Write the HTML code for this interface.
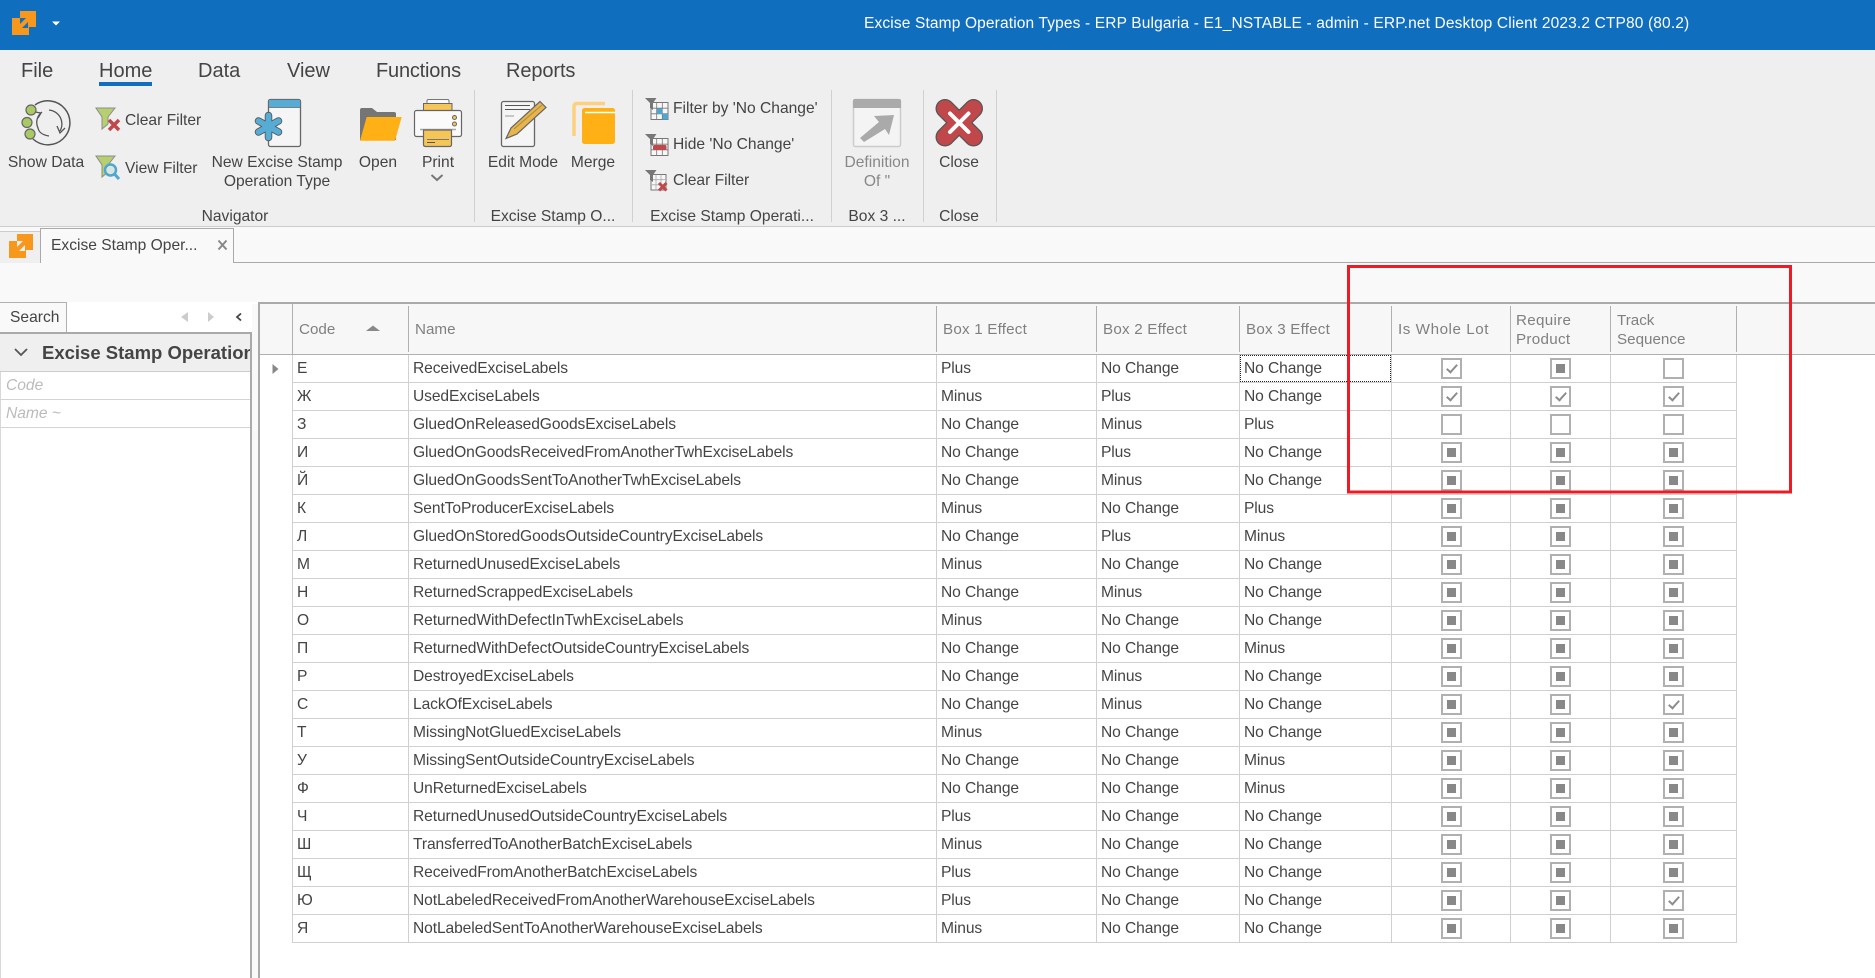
<!DOCTYPE html>
<html><head><meta charset="utf-8"><style>
html,body{margin:0;padding:0;width:1875px;height:978px;overflow:hidden;background:#fff;font-family:"Liberation Sans",sans-serif;color:#444}
.a{position:absolute;white-space:nowrap;line-height:20px}
.m{font-size:20px;top:61px}
.t{font-size:15.6px}
.c{transform:translateX(-50%)}
.h{font-size:15.2px;color:#808080}
#g{position:absolute;left:292px;top:355px;border-left:1px solid #d0d0d0}
.r{display:grid;grid-template-columns:116px 528px 160px 143px 152px 119px 100px 126px;height:28px;font-size:15.6px;letter-spacing:-.1px;line-height:27px}
.r>*{border:solid #d0d0d0;border-width:0 1px 1px 0;box-sizing:border-box;padding-left:4px;white-space:nowrap;overflow:hidden;position:relative;display:block;font-style:normal;height:28px}
.r>i::before{content:"";position:absolute;box-sizing:border-box;width:21px;height:21px;top:3px;border:2px solid #b0b0b0;background:#fff}
.n::after{content:"";position:absolute;width:9px;height:9px;background:#888;top:9px}
.v::after{content:"";position:absolute;box-sizing:border-box;width:6px;height:11px;border:solid #8c8c8c;border-width:0 2px 2px 0;transform:rotate(42deg);top:7px}
.r>i:nth-child(6)::before{left:49px}.r>i:nth-child(6).n::after{left:55px}.r>i:nth-child(6).v::after{left:57px}
.r>i:nth-child(7)::before{left:39px}.r>i:nth-child(7).n::after{left:45px}.r>i:nth-child(7).v::after{left:47px}
.r>i:nth-child(8)::before{left:52px}.r>i:nth-child(8).n::after{left:58px}.r>i:nth-child(8).v::after{left:60px}
.l{position:absolute;background:#b0b0b0;width:1px;top:306px;height:46px}
</style></head><body>
<div style="position:absolute;left:0;top:0;width:1875px;height:50px;background:#0f6ebe"></div>
<div style="position:absolute;left:0;top:50px;width:1875px;height:176px;background:#efefef"></div>
<div style="position:absolute;left:0;top:226px;width:1875px;height:1px;background:#ccc"></div>
<div style="position:absolute;left:0;top:227px;width:1875px;height:75px;background:#f9f9f9"></div>
<div style="position:absolute;left:0;top:262px;width:1875px;height:1px;background:#aaa"></div>
<div style="position:absolute;left:0;top:231px;width:40px;height:31px;background:#efefef;border-top:1px solid #ccc"></div>
<div style="position:absolute;left:40px;top:228px;width:194px;height:35px;box-sizing:border-box;background:#f9f9f9;border:1px solid #aaa;border-bottom:0"></div>

<div class="a" style="left:864px;top:14px;width:825px;font-size:15.5px;color:#fff;letter-spacing:.145px">Excise Stamp Operation Types - ERP Bulgaria - E1_NSTABLE - admin - ERP.net Desktop Client 2023.2 CTP80 (80.2)</div>

<span class="a m" style="left:21px">File</span>
<span class="a m" style="left:99px">Home</span>
<div style="position:absolute;left:99px;top:82px;width:53px;height:4px;background:#0f6ebe"></div>
<span class="a m" style="left:198px">Data</span>
<span class="a m" style="left:287px">View</span>
<span class="a m" style="left:376px;letter-spacing:-.2px">Functions</span>
<span class="a m" style="left:506px;letter-spacing:-.1px">Reports</span>

<span class="a t c" style="left:46px;top:153px">Show Data</span>
<span class="a t" style="left:125px;top:111px">Clear Filter</span>
<span class="a t" style="left:125px;top:159px">View Filter</span>
<span class="a t c" style="left:277px;top:153px">New Excise Stamp</span>
<span class="a t c" style="left:277px;top:172px">Operation Type</span>
<span class="a t c" style="left:378px;top:153px">Open</span>
<span class="a t c" style="left:438px;top:153px">Print</span>
<span class="a t c" style="left:523px;top:153px">Edit Mode</span>
<span class="a t c" style="left:593px;top:153px">Merge</span>
<span class="a t" style="left:673px;top:99px">Filter by 'No Change'</span>
<span class="a t" style="left:673px;top:135px">Hide 'No Change'</span>
<span class="a t" style="left:673px;top:171px">Clear Filter</span>
<span class="a t c" style="left:877px;top:153px;color:#888">Definition</span>
<span class="a t c" style="left:877px;top:172px;color:#888">Of "</span>
<span class="a t c" style="left:959px;top:153px">Close</span>
<span class="a t c" style="left:235px;top:207px">Navigator</span>
<span class="a t c" style="left:553px;top:207px">Excise Stamp O...</span>
<span class="a t c" style="left:732px;top:207px">Excise Stamp Operati...</span>
<span class="a t c" style="left:877px;top:207px">Box 3 ...</span>
<span class="a t c" style="left:959px;top:207px">Close</span>
<span class="a t" style="left:51px;top:236px">Excise Stamp Oper...</span>

<!-- left panel -->
<div style="position:absolute;left:0;top:302px;width:67px;height:31px;box-sizing:border-box;border:solid #b0b0b0;border-width:1px 1px 0 0;background:#f9f9f9"></div>
<span class="a t" style="left:10px;top:308px">Search</span>
<div style="position:absolute;left:0;top:332px;width:252px;height:646px;box-sizing:border-box;border:solid #aaa;border-width:2px 2px 0 0;background:#fff;overflow:hidden">
<div style="position:absolute;left:0;top:0;width:1px;height:646px;background:#d8d8d8"></div>
<div style="position:absolute;left:0;top:0;width:250px;height:37px;background:#efefef;border-bottom:1px solid #ccc"></div>
<div class="a" style="left:42px;top:9px;font-size:18.5px;font-weight:bold;line-height:20px;color:#444">Excise Stamp Operation</div>
<div style="position:absolute;left:0;top:65px;width:250px;height:1px;background:#d4d4d4"></div>
<div style="position:absolute;left:0;top:93px;width:250px;height:1px;background:#d4d4d4"></div>
<span class="a" style="left:6px;top:42px;font-size:15.6px;font-style:italic;color:#bbb">Code</span>
<span class="a" style="left:6px;top:70px;font-size:15.6px;font-style:italic;color:#bbb">Name ~</span>
</div>

<!-- grid -->
<div style="position:absolute;left:258px;top:302px;width:1617px;height:2px;background:#aaa"></div>
<div style="position:absolute;left:258px;top:302px;width:2px;height:676px;background:#aaa"></div>
<div style="position:absolute;left:260px;top:304px;width:1615px;height:50px;background:#f7f7f7"></div>
<div style="position:absolute;left:252px;top:304px;width:6px;height:674px;background:#f9f9f9"></div>
<div style="position:absolute;left:260px;top:354px;width:1615px;height:1px;background:#b0b0b0"></div>
<div class="l" style="left:292px;top:304px;height:50px"></div><div class="l" style="left:408px"></div><div class="l" style="left:936px"></div><div class="l" style="left:1096px"></div><div class="l" style="left:1239px"></div><div class="l" style="left:1391px"></div><div class="l" style="left:1510px"></div><div class="l" style="left:1610px"></div><div class="l" style="left:1736px"></div>
<span class="a h" style="left:299px;top:320px">Code</span>
<span class="a h" style="left:415px;top:320px">Name</span>
<span class="a h" style="left:943px;top:320px;letter-spacing:.2px">Box 1 Effect</span>
<span class="a h" style="left:1103px;top:320px;letter-spacing:.2px">Box 2 Effect</span>
<span class="a h" style="left:1246px;top:320px;letter-spacing:.2px">Box 3 Effect</span>
<span class="a h" style="left:1398px;top:320px;letter-spacing:.55px">Is Whole Lot</span>
<span class="a h" style="left:1516px;top:311px;letter-spacing:.3px">Require</span>
<span class="a h" style="left:1516px;top:330px;letter-spacing:.3px">Product</span>
<span class="a h" style="left:1617px;top:311px">Track</span>
<span class="a h" style="left:1617px;top:330px">Sequence</span>

<div id="g">
<div class="r"><span>Е</span><span>ReceivedExciseLabels</span><span>Plus</span><span>No Change</span><span>No Change</span><i class="v"></i><i class="n"></i><i></i></div>
<div class="r"><span>Ж</span><span>UsedExciseLabels</span><span>Minus</span><span>Plus</span><span>No Change</span><i class="v"></i><i class="v"></i><i class="v"></i></div>
<div class="r"><span>З</span><span>GluedOnReleasedGoodsExciseLabels</span><span>No Change</span><span>Minus</span><span>Plus</span><i></i><i></i><i></i></div>
<div class="r"><span>И</span><span>GluedOnGoodsReceivedFromAnotherTwhExciseLabels</span><span>No Change</span><span>Plus</span><span>No Change</span><i class="n"></i><i class="n"></i><i class="n"></i></div>
<div class="r"><span>Й</span><span>GluedOnGoodsSentToAnotherTwhExciseLabels</span><span>No Change</span><span>Minus</span><span>No Change</span><i class="n"></i><i class="n"></i><i class="n"></i></div>
<div class="r"><span>К</span><span>SentToProducerExciseLabels</span><span>Minus</span><span>No Change</span><span>Plus</span><i class="n"></i><i class="n"></i><i class="n"></i></div>
<div class="r"><span>Л</span><span>GluedOnStoredGoodsOutsideCountryExciseLabels</span><span>No Change</span><span>Plus</span><span>Minus</span><i class="n"></i><i class="n"></i><i class="n"></i></div>
<div class="r"><span>М</span><span>ReturnedUnusedExciseLabels</span><span>Minus</span><span>No Change</span><span>No Change</span><i class="n"></i><i class="n"></i><i class="n"></i></div>
<div class="r"><span>Н</span><span>ReturnedScrappedExciseLabels</span><span>No Change</span><span>Minus</span><span>No Change</span><i class="n"></i><i class="n"></i><i class="n"></i></div>
<div class="r"><span>О</span><span>ReturnedWithDefectInTwhExciseLabels</span><span>Minus</span><span>No Change</span><span>No Change</span><i class="n"></i><i class="n"></i><i class="n"></i></div>
<div class="r"><span>П</span><span>ReturnedWithDefectOutsideCountryExciseLabels</span><span>No Change</span><span>No Change</span><span>Minus</span><i class="n"></i><i class="n"></i><i class="n"></i></div>
<div class="r"><span>Р</span><span>DestroyedExciseLabels</span><span>No Change</span><span>Minus</span><span>No Change</span><i class="n"></i><i class="n"></i><i class="n"></i></div>
<div class="r"><span>С</span><span>LackOfExciseLabels</span><span>No Change</span><span>Minus</span><span>No Change</span><i class="n"></i><i class="n"></i><i class="v"></i></div>
<div class="r"><span>Т</span><span>MissingNotGluedExciseLabels</span><span>Minus</span><span>No Change</span><span>No Change</span><i class="n"></i><i class="n"></i><i class="n"></i></div>
<div class="r"><span>У</span><span>MissingSentOutsideCountryExciseLabels</span><span>No Change</span><span>No Change</span><span>Minus</span><i class="n"></i><i class="n"></i><i class="n"></i></div>
<div class="r"><span>Ф</span><span>UnReturnedExciseLabels</span><span>No Change</span><span>No Change</span><span>Minus</span><i class="n"></i><i class="n"></i><i class="n"></i></div>
<div class="r"><span>Ч</span><span>ReturnedUnusedOutsideCountryExciseLabels</span><span>Plus</span><span>No Change</span><span>No Change</span><i class="n"></i><i class="n"></i><i class="n"></i></div>
<div class="r"><span>Ш</span><span>TransferredToAnotherBatchExciseLabels</span><span>Minus</span><span>No Change</span><span>No Change</span><i class="n"></i><i class="n"></i><i class="n"></i></div>
<div class="r"><span>Щ</span><span>ReceivedFromAnotherBatchExciseLabels</span><span>Plus</span><span>No Change</span><span>No Change</span><i class="n"></i><i class="n"></i><i class="n"></i></div>
<div class="r"><span>Ю</span><span>NotLabeledReceivedFromAnotherWarehouseExciseLabels</span><span>Plus</span><span>No Change</span><span>No Change</span><i class="n"></i><i class="n"></i><i class="v"></i></div>
<div class="r"><span>Я</span><span>NotLabeledSentToAnotherWarehouseExciseLabels</span><span>Minus</span><span>No Change</span><span>No Change</span><i class="n"></i><i class="n"></i><i class="n"></i></div>
</div>
<div style="position:absolute;left:1240px;top:355px;width:151px;height:27px;box-sizing:border-box;border:1px dotted #222"></div>

<!-- icons overlay -->
<svg width="1875" height="978" viewBox="0 0 1875 978" style="position:absolute;left:0;top:0" fill="none">
<!-- logo -->
<g transform="translate(12 11)"><path d="M8 0H24V16H17V24H0V7H8Z" fill="#f7981d"/><path d="M8 7H14L8 13ZM16 17H10L16 11Z" fill="#0f6ebe"/></g>
<path d="M52 21.500H60L56 25.500Z" fill="#fff"/>
<g transform="translate(9 234)"><path d="M8 0H24V16H17V24H0V7H8Z" fill="#f7981d"/><path d="M8 7H14L8 13ZM16 17H10L16 11Z" fill="#efefef"/></g>
<path d="M218.500 240.500L226.500 249.500M226.500 240.500L218.500 249.500" stroke="#888" stroke-width="2"/>
<!-- show data -->
<path d="M35 105A22 22 0 1 1 33 139" stroke="#555" stroke-width="1.500"/>
<path d="M42 112A13 13 0 0 0 38 128C39 133 43 135 49 136" stroke="#555" stroke-width="1.300"/>
<path d="M49 110A14 14 0 0 1 60 131" stroke="#555" stroke-width="1.300"/>
<path d="M35 112L41 113 38 118M57 126L60 133 65 128" stroke="#555" stroke-width="1.300"/>
<g fill="#a8c964" stroke="#666" stroke-width="1.200"><circle cx="31" cy="110" r="5"/><circle cx="27" cy="122.500" r="5"/><circle cx="30" cy="134" r="5"/></g>
<!-- clear/view filter -->
<path d="M96 108H115L108 117V124L102 129V117Z" fill="#b7d06f" stroke="#8c8c8c" stroke-width="1"/>
<path d="M109 120L119 130M119 120L109 130" stroke="#c0474a" stroke-width="3.500"/>
<path d="M96 156H115L108 165V172L102 177V165Z" fill="#b7d06f" stroke="#8c8c8c" stroke-width="1"/>
<circle cx="110.500" cy="170" r="5.500" stroke="#4fa6cf" stroke-width="2.500" fill="#d8e6e0"/><path d="M114.500 174L119 179" stroke="#4fa6cf" stroke-width="3"/>
<!-- new -->
<rect x="268.500" y="99.500" width="32" height="47" rx="2" fill="#f5f5f5" stroke="#666" stroke-width="1.300"/>
<rect x="268.500" y="99.500" width="32" height="8" rx="1.500" fill="#56acd5" stroke="#666" stroke-width=".8"/>
<g transform="translate(268.500 126.500)"><g stroke="#555" stroke-width="7.500" stroke-linecap="round"><path d="M0 -11V11M-10 -5.500L10 5.500M-10 5.500L10 -5.500"/></g><g stroke="#56acd5" stroke-width="5.800" stroke-linecap="round"><path d="M0 -11V11M-10 -5.500L10 5.500M-10 5.500L10 -5.500"/></g></g>
<!-- open -->
<path d="M360 110Q360 108 362 108H372L377 112H394Q396 112 396 114V140H360Z" fill="#757575"/>
<path d="M366.700 117H401.700L395 140.700H360Z" fill="#ffb014"/>
<!-- print -->
<rect x="427" y="99.500" width="22" height="6" rx="1.500" fill="#fafafa" stroke="#777"/>
<rect x="423.500" y="103.500" width="28.500" height="8" fill="#f5c558" stroke="#666"/>
<rect x="414.500" y="110.500" width="47" height="26" rx="2" fill="#fafafa" stroke="#666" stroke-width="1.200"/>
<path d="M420 129.500H456" stroke="#aaa" stroke-width="1.500"/>
<path d="M423.500 130H451.500V144.500Q451.500 146.500 449.500 146.500H425.500Q423.500 146.500 423.500 144.500Z" fill="#f5c558" stroke="#666" stroke-width="1.200"/>
<path d="M427 139.500H449" stroke="#777"/><path d="M427 142.500H435" stroke="#555"/>
<circle cx="454.500" cy="117.500" r="2" fill="#f5c558" stroke="#666"/><circle cx="454.500" cy="124" r="2" fill="#f5c558" stroke="#666"/>
<path d="M431.500 175L437 180 442.500 175" stroke="#777" stroke-width="2"/>
<!-- edit -->
<rect x="501.500" y="101.500" width="33" height="45" rx="2" fill="#f5f5f5" stroke="#666" stroke-width="1.300"/>
<path d="M505 105.500H530M505 109.500H530" stroke="#555"/><path d="M505 116H514" stroke="#999"/>
<path d="M540 101.500L546 107.500 517 134 506 138.500 511 128Z" fill="#e8b44c" stroke="#666" stroke-width="1.200"/>
<path d="M514 129L542 105" stroke="#a88a40"/>
<!-- merge -->
<path d="M605 103.500H577Q574 103.500 574 106.500V136" stroke="#fdd07f" stroke-width="3.500"/>
<rect x="582" y="108" width="33" height="36" rx="2.500" fill="#ffb014"/>
<path d="M585 112.500H615" stroke="#fff" stroke-width="1.500"/>
<!-- filter grids -->
<g id="f1"><rect x="651" y="102.500" width="17" height="17" fill="#f7f7f7" stroke="#777"/><path d="M656.700 102.500V119.500M662.300 102.500V119.500M651 108.200H668M651 113.800H668" stroke="#777" stroke-width=".8"/><path d="M657 108.500h5.500v5.500H657ZM662.500 114H668v5.500H662.500Z" fill="#4fa6cf"/><path d="M645 98H656.500L653 103V110L650 108V103Z" fill="#777"/></g>
<g transform="translate(0 36)"><rect x="651" y="102.500" width="17" height="17" fill="#f7f7f7" stroke="#777"/><path d="M656.700 102.500V119.500M662.300 102.500V119.500M651 108.200H668M651 113.800H668" stroke="#777" stroke-width=".8"/><path d="M645 98H656.500L653 103V110L650 108V103Z" fill="#777"/><rect x="653" y="109" width="13.500" height="5" rx="1.500" fill="#c0474a"/></g>
<g transform="translate(0 72)"><rect x="651" y="102.500" width="15" height="15.500" fill="#f7f7f7" stroke="#777"/><path d="M656 102.500V118M661 102.500V118M651 107.700H666M651 112.800H666" stroke="#aaa" stroke-width=".8"/><path d="M645 98H656.500L653 103V110L650 108V103Z" fill="#777"/><path d="M659 111L666.500 118.500M666.500 111L659 118.500" stroke="#c0474a" stroke-width="3"/></g>
<!-- definition -->
<rect x="853.500" y="99.500" width="47" height="47" rx="2" fill="#f4f4f4" stroke="#ccc" stroke-width="1.500"/>
<path d="M853 101Q853 99 855 99H899Q901 99 901 101V108H853Z" fill="#aaa"/>
<path d="M860 138L879 122 874 116 894 115 889 135 885 129 864 142Z" fill="#aaa"/>
<!-- close -->
<g stroke-linecap="round"><path d="M945 108.500L973.500 137M945 137L973.500 108.500" stroke="#555" stroke-width="19"/><path d="M945 108.500L973.500 137M945 137L973.500 108.500" stroke="#c0474a" stroke-width="16.500"/><path d="M950 113.500L968.500 132M950 132L968.500 113.500" stroke="#fff" stroke-width="4"/></g>
<!-- separators -->
<path d="M474.500 90V222M632.500 90V222M831.500 90V222M923.500 90V222M996.500 90V222" stroke="#d0d0d0"/>
<!-- panel controls -->
<path d="M15 349L21 355 27 349" stroke="#555" stroke-width="1.800"/>
<path d="M188 312V322L181 317Z" fill="#ccc"/><path d="M208 312V322L214 317Z" fill="#ccc"/>
<path d="M241 313.500L237 317 241 320.500" stroke="#444" stroke-width="1.800"/>
<path d="M366 331L373 325.500 380 331Z" fill="#888"/>
<path d="M272.500 364V374L278.500 369Z" fill="#888"/>
<!-- red rect -->
<rect x="1348.500" y="266.500" width="442" height="225.500" stroke="#ed1c24" stroke-width="3"/>
</svg>
</body></html>
